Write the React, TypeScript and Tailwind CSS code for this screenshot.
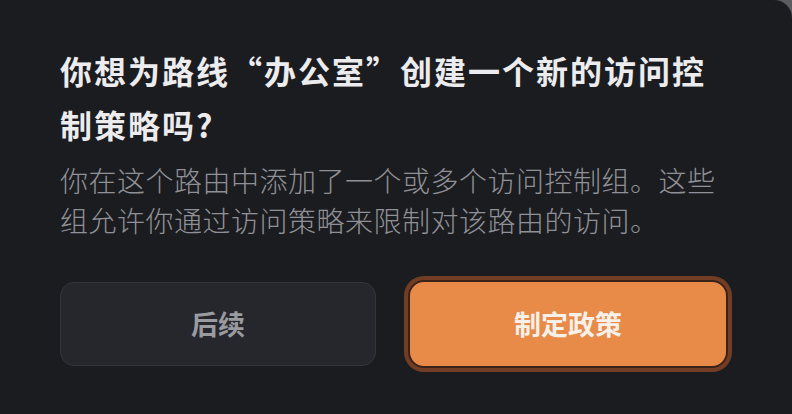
const FONT = { fontFamily: '"Noto Sans CJK SC", "Noto Sans", sans-serif' };

export default function App() {
  return (
    <div className="w-[792px] h-[414px] bg-[#5b5c60] overflow-hidden" style={FONT}>
      <div className="w-full h-full bg-[#1b1c20] rounded-tr-[18px] pt-[43px] pl-[60px]">
        <div className="w-[672px]">
          <h1 className="text-[32px] leading-[54px] font-bold tracking-[2px] text-[#ececee]">
            你想为路线“办公室”创建一个新的访问控制策略吗?
          </h1>
          <p className="mt-[9px] text-[28px] leading-[40px] tracking-[0.5px] font-light text-[#909196]">
            你在这个路由中添加了一个或多个访问控制组。这些组允许你通过访问策略来限制对该路由的访问。
          </p>
        </div>
        <div className="mt-[40px] flex items-center gap-[32px]">
          <button className="w-[316px] h-[84px] rounded-[14px] bg-[#26272c] border border-[#32353b] text-[27px] font-bold text-[#9a9ba0]">
            后续
          </button>
          <button className="w-[320px] h-[88px] rounded-[16px] bg-[#e88a48] border-2 border-[#3b2318] ring-4 ring-[#723d24] text-[27px] font-bold text-[#f7f1ea]">
            制定政策
          </button>
        </div>
      </div>
    </div>
  );
}
